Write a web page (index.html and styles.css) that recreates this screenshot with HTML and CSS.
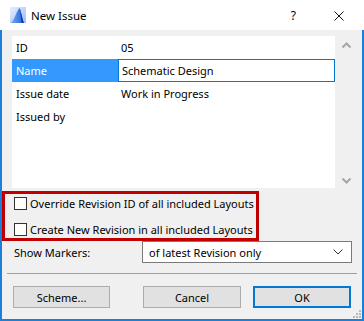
FILE: index.html
```html
<!DOCTYPE html>
<html lang="en">
<head>
  <meta charset="UTF-8" />
  <title>New Issue</title>
  <link rel="stylesheet" href="styles.css">
</head>
<body>
  <div class="window">
    <div class="titlebar">
      <svg class="app-icon" width="16" height="16" viewBox="0 0 16 16">
        <defs>
          <linearGradient id="bg" x1="0" y1="0" x2="1" y2="1">
            <stop offset="0" stop-color="#e8f0ff"/>
            <stop offset="1" stop-color="#9dbcf5"/>
          </linearGradient>
          <linearGradient id="arch" x1="0" y1="0" x2="1" y2="0">
            <stop offset="0" stop-color="#7aa8f2"/>
            <stop offset="1" stop-color="#1f5fd6"/>
          </linearGradient>
        </defs>
        <rect x="0" y="0" width="16" height="16" fill="url(#bg)"/>
        <path d="M1 16 C5 12 7 3 9.5 1 C11 4 12 11 14 16 Z" fill="url(#arch)"/>
        <path d="M9.5 1 C10.5 5 11 11 11.5 16 L14 16 C12 11 11 4 9.5 1 Z" fill="#0b3fae"/>
      </svg>
      <span class="title">New Issue</span>
      <span class="spacer"></span>
      <span class="help">?</span>
      <svg class="close" width="10" height="10" viewBox="0 0 10 10">
        <path d="M0.5 0.5 L9.5 9.5 M9.5 0.5 L0.5 9.5" stroke="#111" stroke-width="1"/>
      </svg>
    </div>

    <div class="content">
      <div class="list">
        <div class="table">
          <div class="row">
            <div class="cell-label">ID</div>
            <div class="cell-value">05</div>
          </div>
          <div class="row selected">
            <div class="cell-label">Name</div>
            <div class="cell-value editing">Schematic Design</div>
          </div>
          <div class="row">
            <div class="cell-label">Issue date</div>
            <div class="cell-value">Work in Progress</div>
          </div>
          <div class="row">
            <div class="cell-label">Issued by</div>
            <div class="cell-value"></div>
          </div>
        </div>
        <div class="scrollbar">
          <svg width="9" height="6" viewBox="0 0 9 6"><path d="M0.5 5.5 L4.5 1.5 L8.5 5.5" fill="none" stroke="#a6a6a6" stroke-width="2"/></svg>
          <svg width="9" height="6" viewBox="0 0 9 6"><path d="M0.5 0.5 L4.5 4.5 L8.5 0.5" fill="none" stroke="#a6a6a6" stroke-width="2"/></svg>
        </div>
      </div>

      <div class="options">
        <label class="check"><span class="box"></span>Override Revision ID of all included Layouts</label>
        <label class="check"><span class="box"></span>Create New Revision in all included Layouts</label>
      </div>

      <div class="markers">
        <span class="markers-label">Show Markers:</span>
        <div class="select">
          <span>of latest Revision only</span>
          <svg width="10" height="6" viewBox="0 0 10 6"><path d="M0.5 0.5 L5 5 L9.5 0.5" fill="none" stroke="#333" stroke-width="1"/></svg>
        </div>
      </div>

      <div class="separator"></div>

      <div class="buttons">
        <button class="btn">Scheme...</button>
        <button class="btn">Cancel</button>
        <button class="btn primary">OK</button>
      </div>
      <div class="grip">
        <span></span><span></span><span></span><span></span><span></span><span></span>
      </div>
    </div>
  </div>
</body>
</html>
```

FILE: styles.css
```css
* {
  margin: 0;
  padding: 0;
  box-sizing: border-box;
}

body {
  font-family: "Noto Sans", "Open Sans", sans-serif;
  font-size: 11px;
  color: #000;
  background: #fff;
  white-space: nowrap;
}

.window {
  width: 364px;
  height: 321px;
  display: flex;
  flex-direction: column;
}

.titlebar {
  height: 30px;
  background: #fff;
  display: flex;
  align-items: center;
  padding: 0 20px 0 10px;
}

.app-icon {
  margin-right: 5px;
}

.title {
  font-size: 11.5px;
  color: #000;
}

.spacer {
  flex: 1;
}

.help {
  font-size: 12px;
  margin-right: 38px;
}

.close {
  margin-top: 1px;
}

.content {
  flex: 1;
  background: #f0f0f0;
  border: 2px solid #1c7fd9;
  border-top: none;
  padding: 6px 5px 0 0;
  display: flex;
  flex-direction: column;
  position: relative;
}

.list {
  display: flex;
  height: 152px;
  margin-left: 10px;
}

.table {
  width: 323px;
  background: #fff;
}

.row {
  height: 23px;
  display: flex;
  align-items: center;
}

.cell-label {
  width: 106px;
  height: 100%;
  padding-left: 4px;
  display: flex;
  align-items: center;
}

.cell-value {
  flex: 1;
  height: 100%;
  padding-left: 3px;
  display: flex;
  align-items: center;
}

.selected .cell-label {
  background: #3399ff;
  color: #fff;
}

.editing {
  border: 1px solid #0078d7;
  padding-left: 3px;
}

.scrollbar {
  flex: 1;
  display: flex;
  flex-direction: column;
  justify-content: space-between;
  align-items: center;
  padding: 6px 0 4px 0;
}

.options {
  width: 257px;
  height: 50px;
  margin-top: 3px;
  border: 3px solid #c00000;
  padding: 3px 0 0 9px;
  display: flex;
  flex-direction: column;
  gap: 13px;
}

.check {
  display: flex;
  align-items: center;
  height: 13px;
  gap: 3px;
}

.box {
  width: 13px;
  height: 13px;
  border: 1px solid #333;
  background: #fff;
}

.markers {
  display: flex;
  align-items: center;
  height: 22px;
  margin-left: 12px;
}

.markers-label {
  width: 128px;
}

.select {
  width: 210px;
  height: 22px;
  border: 1px solid #7a7a7a;
  background: #fff;
  display: flex;
  align-items: center;
  justify-content: space-between;
  padding: 0 8px 0 6px;
}

.separator {
  height: 1px;
  background: #a0a0a0;
  margin: 10px 0 0 5px;
}

.buttons {
  display: flex;
  margin: 12px 0 0 11px;
}

.btn {
  height: 22px;
  background: #e1e1e1;
  border: 1px solid #adadad;
  font-family: inherit;
  font-size: 11px;
  color: #000;
}

.btn:nth-child(1) {
  width: 97px;
  margin-right: 33px;
}

.btn:nth-child(2) {
  width: 98px;
  margin-right: 12px;
}

.primary {
  width: 98px;
  border: 2px solid #0078d7;
}

.grip {
  position: absolute;
  right: 1px;
  bottom: 1px;
  width: 7px;
  height: 7px;
}

.grip span {
  position: absolute;
  width: 2px;
  height: 2px;
  background: #b8b8b8;
}

.grip span:nth-child(1) { right: 0; bottom: 0; }
.grip span:nth-child(2) { right: 3px; bottom: 0; }
.grip span:nth-child(3) { right: 6px; bottom: 0; }
.grip span:nth-child(4) { right: 0; bottom: 3px; }
.grip span:nth-child(5) { right: 3px; bottom: 3px; }
.grip span:nth-child(6) { right: 0; bottom: 6px; }
```
